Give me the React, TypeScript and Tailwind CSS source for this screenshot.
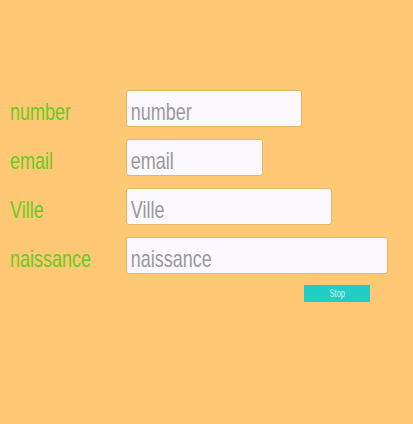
import React from 'react';

const fields = [
  { name: 'number', width: 'w-[176px]' },
  { name: 'email', width: 'w-[137px]' },
  { name: 'Ville', width: 'w-[206px]' },
  { name: 'naissance', width: 'w-[262px]' },
];

export default function App() {
  return (
    <div className="w-[413px] h-[424px] bg-[#ffc874] pt-[90px] font-['Liberation_Sans',Arial,sans-serif]">
      <form className="flex flex-col gap-[12px]">
        {fields.map((f) => (
          <div key={f.name} className="flex items-center">
            <label className="w-[126px] pl-[10px] pt-[6px] text-[24px] leading-none text-[#66cc22]">
              <span className="inline-block origin-left scale-x-[0.75]">{f.name}</span>
            </label>
            <div
              className={`${f.width} h-[37px] overflow-hidden rounded-[3px] border border-[#e8b56a] bg-[#fbf9fe]`}
            >
              <input
                type="text"
                placeholder={f.name}
                className="w-[134%] h-full origin-left scale-x-[0.75] bg-transparent pl-[5px] pt-[6px] text-[24px] leading-none text-[#555] placeholder:text-[#9a9a9a] outline-none"
              />
            </div>
          </div>
        ))}
        <div className="flex justify-end pr-[43px] -mt-[1px]">
          <button
            type="button"
            className="w-[66px] h-[17px] bg-[#22cdc6] text-[10px] leading-none text-[#c6f6f3]"
          >
            <span className="inline-block scale-x-[0.75]">Stop</span>
          </button>
        </div>
      </form>
    </div>
  );
}
